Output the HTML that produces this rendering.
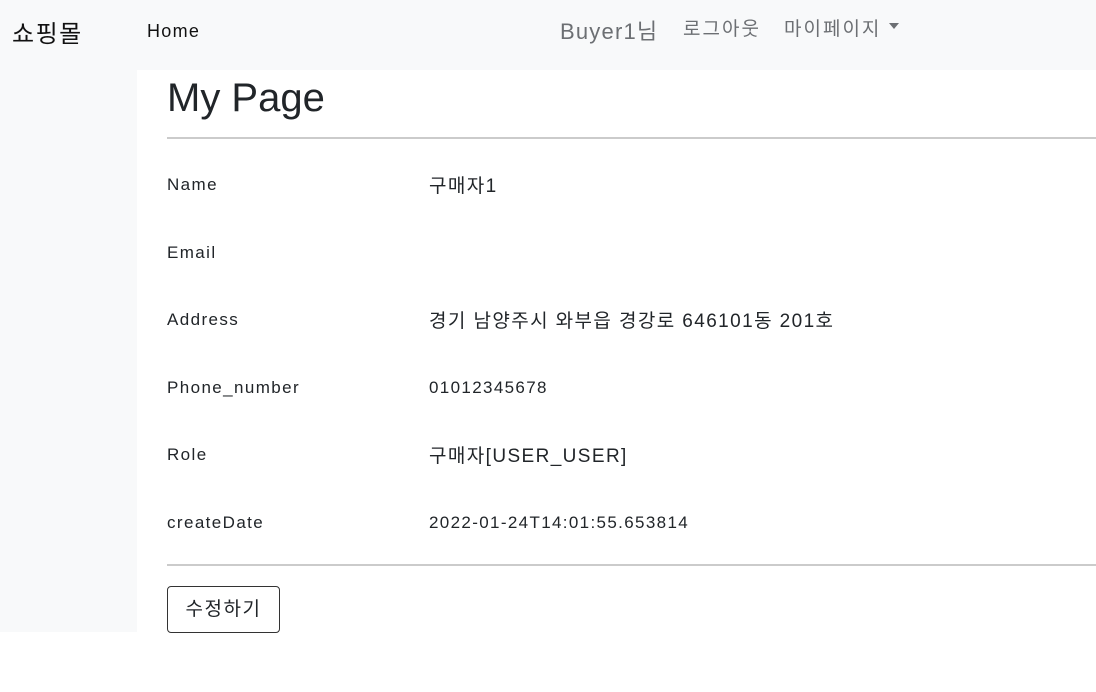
<!DOCTYPE html>
<html><head><meta charset="utf-8"><style>
body{margin:0;width:1096px;height:692px;background:#fff;font-family:"Liberation Sans","Noto Sans CJK KR",sans-serif;color:#212529;position:relative;overflow:hidden}
.nav{position:absolute;left:0;top:0;width:1096px;height:70px;background:#f8f9fa}
.side{position:absolute;left:0;top:70px;width:137px;height:562px;background:#f8f9fa}
.t{position:absolute;white-space:nowrap}
.hr{position:absolute;left:167px;width:929px;height:2px;background:#cbcbcb}
.lbl{position:absolute;left:167px;font-size:17px;letter-spacing:1.4px}
.val{position:absolute;left:429px;font-size:17px;letter-spacing:1.35px}
.k{font-size:19px;letter-spacing:1.4px}
</style></head><body>
<div class="nav"></div><div class="side"></div>
<div class="t" style="left:12px;top:14px;font-size:24px;letter-spacing:1.5px;color:#111">쇼핑몰</div>
<div class="t" style="left:147px;top:21px;font-size:18px;letter-spacing:1.3px;color:#111">Home</div>
<div class="t" style="left:560px;top:14px;font-size:22px;letter-spacing:1.2px;color:#6c6f73">Buyer1님</div>
<div class="t" style="left:683px;top:14px;font-size:19px;letter-spacing:2px;color:#6c6f73">로그아웃</div>
<div class="t" style="left:784px;top:14px;font-size:19px;letter-spacing:2px;color:#6c6f73">마이페이지</div>
<div class="t" style="left:889px;top:23px;width:0;height:0;border-left:5px solid transparent;border-right:5px solid transparent;border-top:6px solid #6c6f73"></div>
<div class="t" style="left:167px;top:76px;font-size:40px;color:#212529">My Page</div>
<div class="hr" style="top:137px"></div>
<div class="lbl" style="top:175px">Name</div><div class="val k" style="top:171px">구매자1</div>
<div class="lbl" style="top:243px">Email</div>
<div class="lbl" style="top:310px">Address</div><div class="val k" style="top:306px">경기 남양주시 와부읍 경강로 646101동 201호</div>
<div class="lbl" style="top:378px">Phone_number</div><div class="val" style="top:378px">01012345678</div>
<div class="lbl" style="top:445px">Role</div><div class="val k" style="top:441px">구매자[USER_USER]</div>
<div class="lbl" style="top:513px">createDate</div><div class="val" style="top:513px">2022-01-24T14:01:55.653814</div>
<div class="hr" style="top:564px"></div>
<div class="t" style="left:167px;top:586px;width:111px;height:45px;border:1px solid #333;border-radius:4px;font-size:19px;letter-spacing:1.5px;line-height:45px;text-align:center">수정하기</div>
</body></html>
